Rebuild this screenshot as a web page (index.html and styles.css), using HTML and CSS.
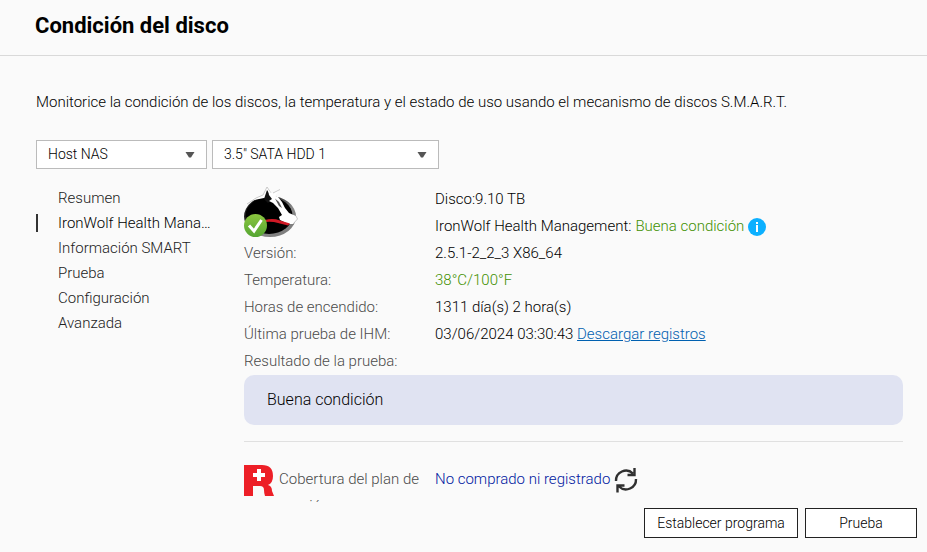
FILE: index.html
```
<!DOCTYPE html>
<html lang="es">
<head>
<meta charset="utf-8">
<title>Condición del disco</title>
<link rel="stylesheet" href="styles.css">
</head>
<body>
<header class="header"><h1>Condición del disco</h1></header>
<div class="content">
  <p class="intro">Monitorice la condición de los discos, la temperatura y el estado de uso usando el mecanismo de discos S.M.A.R.T.</p>
  <div class="filters">
    <div class="picker picker-host">
      <select aria-label="Host"><option>Host NAS</option></select>
      <svg class="arrow" viewBox="0 0 10 6" aria-hidden="true"><path d="M0.500 0h9L6 5.500H4z"/></svg>
    </div>
    <div class="picker picker-disk">
      <select aria-label="Disco"><option>3.5" SATA HDD 1</option></select>
      <svg class="arrow" viewBox="0 0 10 6" aria-hidden="true"><path d="M0.500 0h9L6 5.500H4z"/></svg>
    </div>
  </div>
  <div class="columns">
    <nav class="menu">
      <a href="#resumen">Resumen</a>
      <a href="#ihm" class="active" aria-current="page">IronWolf Health Management</a>
      <a href="#smart">Información SMART</a>
      <a href="#prueba">Prueba</a>
      <a href="#config">Configuración</a>
      <a href="#avanzada">Avanzada</a>
    </nav>
    <main class="panel">
      <dl class="details">
        <dt class="wolf-cell">
          <svg class="wolf" viewBox="0 0 54 52" role="img" aria-label="IronWolf">
            <defs>
              <linearGradient id="rim" x1="0" y1="0" x2="1" y2="1"><stop offset="0.300" stop-color="#222"/><stop offset="0.600" stop-color="#888"/><stop offset="1" stop-color="#777"/></linearGradient>
              <linearGradient id="ok" x1="0" y1="0" x2="0" y2="1"><stop offset="0" stop-color="#8cc63f"/><stop offset="1" stop-color="#54a532"/></linearGradient>
            </defs>
            <ellipse cx="26" cy="30.500" rx="26" ry="20.500" fill="url(#rim)"/>
            <ellipse cx="25" cy="29.500" rx="23.500" ry="18.500"/>
            <path d="M2 17L9 12L18 9L23 1L28 7L36 3L31 10L20 12L10 14z" fill="#fff"/>
            <path d="M3 18L12 12L19 9L23 1L27 7M29 7L36 3.500" fill="none" stroke="#bbb" stroke-width="0.800"/>
            <path d="M20 13L23 4L27 10L29 13L24 17z" fill="#111"/>
            <path d="M24 4L29 9L34 11L38 16L41 22L45 27L52 30L53.500 33L49 38L44 38L36 34L35 31L38 29L34 22L29 17L25 15L28 13L25 9z" fill="#fff"/>
            <path d="M31 12.500L35 16L38 22L35 20z" fill="#555"/>
            <path d="M52 30L53.500 33L49 38" fill="none" stroke="#bbb" stroke-width="0.800"/>
            <path d="M21 34Q29 32 36 34.500L46 37.500L44 39.500L34 37Q28 35 21 36z" fill="#d01925"/>
            <circle cx="11.500" cy="39.500" r="11.500" fill="url(#ok)"/>
            <path d="M5 39.500L10 45L17.500 34" fill="none" stroke="#fff" stroke-width="3"/>
          </svg>
        </dt>
        <dd>Disco:9.10 TB</dd>
        <dd class="status">IronWolf Health Management: <span class="good">Buena condición</span>
          <svg class="info" viewBox="0 0 18 18" role="img" aria-label="Información"><circle cx="9" cy="9" r="9" fill="#0cb0ff"/><path d="M8 4h2v2H8zM8 7h2v7H8z" fill="#fff"/></svg>
        </dd>
        <dt>Versión:</dt><dd>2.5.1-2_2_3 X86_64</dd>
        <dt>Temperatura:</dt><dd class="good">38°C/100°F</dd>
        <dt>Horas de encendido:</dt><dd>1311 día(s) 2 hora(s)</dd>
        <dt>Última prueba de IHM:</dt><dd>03/06/2024 03:30:43 <a class="link" href="#registros">Descargar registros</a></dd>
        <dt>Resultado de la prueba:</dt>
      </dl>
      <div class="result">Buena condición</div>
      <dl class="details coverage">
        <dt><svg class="rescue" viewBox="0 0 30 31" role="img" aria-label="Rescue"><path d="M0 0h18Q29 0 29 11Q29 18 24 20Q28 21 28 26L30 31H21Q20 28 20 25Q20 21 16 21H9V31H0z" fill="#ed1f27"/><path d="M13 4h4v4h4v4h-4v4h-4v-4H9V8h4z" fill="#fff"/></svg>Cobertura del plan de recuperación</dt>
        <dd class="plan">No comprado ni registrado
          <button class="refresh" type="button" aria-label="Actualizar"><svg viewBox="0 0 24 26" aria-hidden="true"><g fill="none" stroke="#303030" stroke-width="2.400"><path d="M2 14A10 10 0 0 1 19 6.500M22 12A10 10 0 0 1 5 19.500M20.500 1V8H13.500M3.500 25.500V18.500H10.500"/></g></svg></button>
        </dd>
      </dl>
    </main>
  </div>
</div>
<footer class="footer">
  <button class="btn btn-wide" type="button">Establecer programa</button>
  <button class="btn" type="button">Prueba</button>
</footer>
</body>
</html>
```

FILE: styles.css
```
* { box-sizing: border-box; }
body {
  margin: 0;
  height: 100vh;
  display: flex;
  flex-direction: column;
  overflow: hidden;
  background: #fafafa;
  color: #000;
  font: 300 15px/27px Roboto, sans-serif;
}
.header {
  flex: none;
  padding: 10px 35px 13px;
  border-bottom: 1px solid #d9d9d9;
}
h1 {
  margin: 0;
  color: #000;
  font-size: 22px;
  line-height: 32px;
  font-weight: 700;
}
.content {
  flex: 1;
  min-height: 0;
  display: flex;
  flex-direction: column;
  padding: 33px 24px 0 36px;
}
.intro { margin: 0 0 24px; }
.filters { display: flex; gap: 5px; flex: none; }
.picker { position: relative; }
.picker-host { width: 171px; }
.picker-disk { width: 227px; }
.picker select {
  appearance: none;
  display: block;
  width: 100%;
  height: 29px;
  padding: 0 24px 1px 11px;
  border: 1px solid #bbb;
  border-radius: 0;
  background: #fff;
  color: #000;
  font: 300 14px Roboto, sans-serif;
}
.arrow {
  position: absolute;
  right: 12px;
  top: 12px;
  width: 10px;
  height: 6px;
  fill: #555;
  pointer-events: none;
}
.columns {
  flex: 1;
  min-height: 0;
  display: grid;
  grid-template-columns: 178px 1fr;
  column-gap: 30px;
  overflow: hidden;
  padding-top: 17px;
}
.menu { line-height: 25px; }
.menu a {
  display: block;
  position: relative;
  padding-left: 22px;
  overflow: hidden;
  text-overflow: ellipsis;
  white-space: nowrap;
  color: #222;
  text-decoration: none;
}
.menu .active { color: #000; }
.menu .active::before {
  content: "";
  position: absolute;
  left: 0;
  top: 3px;
  width: 2px;
  height: 18px;
  background: #333;
}
.details {
  display: grid;
  grid-template-columns: 175px 1fr;
  column-gap: 16px;
  margin: 0;
}
dt { color: #4a4a4a; }
dd { margin: 0; }
.wolf-cell { grid-row: span 2; }
.wolf { display: block; width: 54px; height: 52px; }
.status, .plan { display: flex; align-items: center; gap: 4px; }
.good { color: #3f9000; }
.info { width: 18px; height: 18px; }
.link { color: #0060b0; }
.result {
  padding: 11px 23px 12px;
  border-radius: 10px;
  background: #e0e3f2;
  color: #000;
  font-size: 16px;
}
.coverage {
  margin-top: 16px;
  padding-top: 24px;
  border-top: 1px solid #e0e0e0;
}
.rescue {
  width: 30px;
  height: 31px;
  margin: -4px 5px -4px 0;
  vertical-align: middle;
}
.plan { color: #0018a0; align-self: start; height: 27px; }
.refresh { padding: 0; border: 0; background: none; }
.refresh svg { display: block; width: 24px; height: 26px; }
.footer {
  flex: none;
  display: flex;
  justify-content: flex-end;
  gap: 7px;
  padding: 6px 10px 14px;
}
.btn {
  width: 112px;
  height: 30px;
  padding: 0;
  border: 1px solid #222;
  background: #fff;
  color: #000;
  font: 300 14px Roboto, sans-serif;
}
.btn-wide { width: 154px; }
```
